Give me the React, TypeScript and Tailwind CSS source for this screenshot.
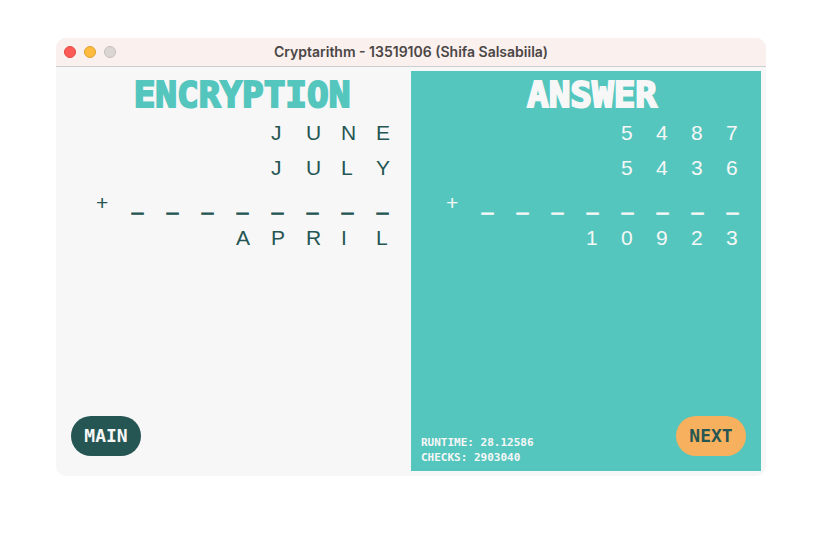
import React from "react";

type Tone = "light" | "teal";

const COLUMNS = 10;

function Row({ text, plus = false }: { text: string; plus?: boolean }) {
  const cells = text.padStart(COLUMNS - 1, " ").split("");
  if (plus) cells[0] = "+";
  return (
    <div className="grid h-[35px] grid-cols-10 items-center">
      <span />
      {cells.map((c, i) => (
        <span
          key={i}
          className={
            c === "_" ? "pl-px text-[20px] [-webkit-text-stroke:1px_currentColor]" : ""
          }
        >
          {c.trim()}
        </span>
      ))}
    </div>
  );
}

function Panel({
  title,
  rows,
  tone,
  children,
}: {
  title: string;
  rows: [string, string, string];
  tone: Tone;
  children: React.ReactNode;
}) {
  const colors =
    tone === "teal" ? "bg-[#55c6be] text-[#f7f7f7]" : "bg-[#f7f7f7] text-[#265653]";
  const heading = tone === "teal" ? "text-[#f7f7f7]" : "text-[#55c6be]";
  return (
    <section className={`flex min-h-[400px] flex-1 flex-col ${colors}`}>
      <h1
        className={`flex h-[44px] items-center justify-center pt-[4px] pl-3 font-['DejaVu_Sans_Mono',monospace] text-[36px] leading-none font-bold [-webkit-text-stroke:2px_currentColor] ${heading}`}
      >
        {title}
      </h1>
      <div className="font-['Liberation_Sans',sans-serif] text-[21px] leading-none">
        <Row text={rows[0]} />
        <Row text={rows[1]} />
        <Row text="________" plus />
        <Row text={rows[2]} />
      </div>
      <div className="mt-auto flex items-end justify-between pr-[15px] pl-[10px]">
        {children}
      </div>
    </section>
  );
}

function PillButton({ label, className }: { label: string; className: string }) {
  return (
    <button
      type="button"
      className={`mb-[15px] h-[40px] w-[70px] rounded-full font-['DejaVu_Sans_Mono',monospace] text-[18px] leading-none font-bold ${className}`}
    >
      {label}
    </button>
  );
}

export default function App() {
  return (
    <div className="min-h-screen bg-white px-[56px] pt-[38px]">
      <main className="overflow-hidden rounded-[10px] bg-[#f7f7f7]">
        <header className="grid h-[29px] grid-cols-[1fr_auto_1fr] items-center border-b border-[#cccfd0] bg-[#faf0ee] px-2">
          <div className="flex gap-2">
            <span className="size-3 rounded-full border border-[#e2453f] bg-[#ff5b56]" />
            <span className="size-3 rounded-full border border-[#dfa02f] bg-[#febb3f]" />
            <span className="size-3 rounded-full border border-[#c4bebc] bg-[#dbd6d4]" />
          </div>
          <p className="font-[Inter,sans-serif] text-[14px] leading-none font-semibold text-[#4b4645]">
            Cryptarithm - 13519106 (Shifa Salsabiila)
          </p>
        </header>
        <div className="flex px-[5px] pt-[4px] pb-[5px]">
          <Panel title="ENCRYPTION" rows={["JUNE", "JULY", "APRIL"]} tone="light">
            <PillButton label="MAIN" className="bg-[#265653] text-[#f7f7f7]" />
          </Panel>
          <Panel title="ANSWER" rows={["5487", "5436", "10923"]} tone="teal">
            <div className="mb-[6px] font-['DejaVu_Sans_Mono',monospace] text-[11px] leading-[15px] font-bold">
              <p>RUNTIME: 28.12586</p>
              <p>CHECKS: 2903040</p>
            </div>
            <PillButton label="NEXT" className="bg-[#f7b05e] text-[#265653]" />
          </Panel>
        </div>
      </main>
    </div>
  );
}
